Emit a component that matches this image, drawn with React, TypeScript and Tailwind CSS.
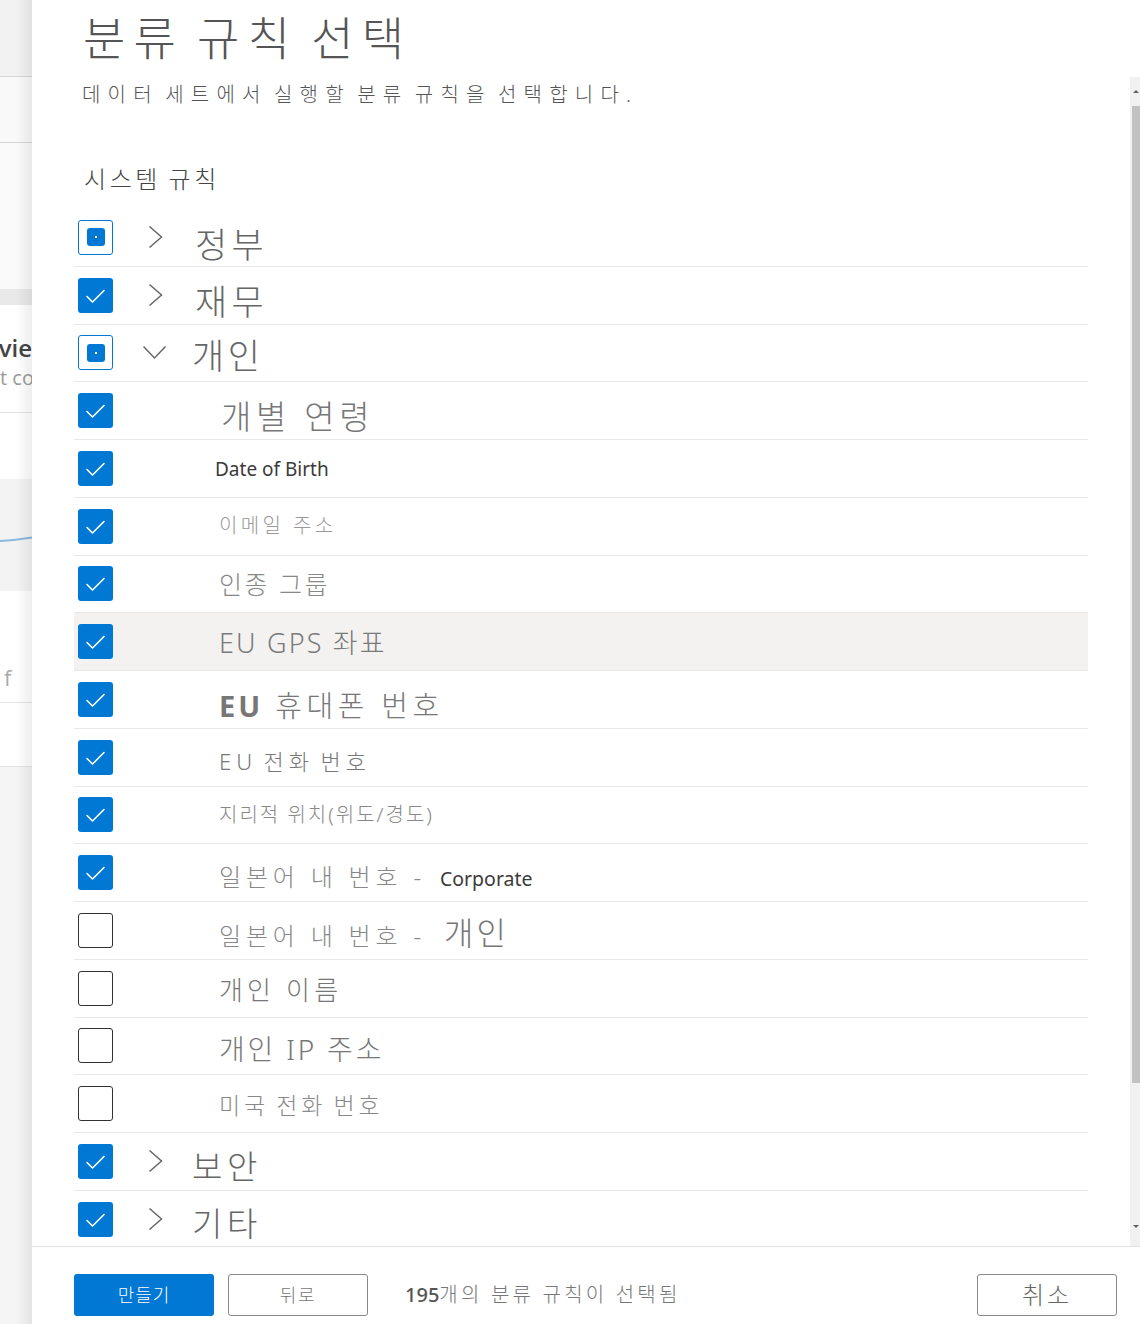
import type { ReactNode } from "react";

type CheckState = "on" | "off" | "mixed";

type Rule = {
  state: CheckState;
  chevron?: "right" | "down";
  label: ReactNode;
  hover?: boolean;
};

const rules: Rule[] = [
  { state: "mixed", chevron: "right", label: <span className="pt-[14px] text-[35px] tracking-[0.12em] text-[#666]">정부</span> },
  { state: "on", chevron: "right", label: <span className="pt-[12px] text-[35px] tracking-[0.12em] text-[#666]">재무</span> },
  { state: "mixed", chevron: "down", label: <span className="ml-[-3px] pt-[6px] text-[35px] tracking-[0.1em] text-[#666]">개인</span> },
  { state: "on", label: <span className="ml-[2px] pt-[12px] text-[33px] tracking-[0.14em] text-[#777]">개별 연령</span> },
  { state: "on", label: <span className="ml-[-4px] pt-[2px] text-[19px] font-normal text-[#3b3a39]">Date of Birth</span> },
  { state: "on", label: <span className="text-[20px] tracking-[0.17em] text-[#999]">이메일 주소</span> },
  { state: "on", label: <span className="pt-[2px] text-[25px] tracking-[0.1em] text-[#888]">인종 그룹</span> },
  { state: "on", hover: true, label: <span className="pt-[2px] text-[27px] tracking-[0.08em] text-[#7a7a7a]">EU GPS 좌표</span> },
  {
    state: "on",
    label: (
      <span className="pt-[13px] text-[29px] tracking-[0.16em] text-[#777]">
        <span className="font-bold tracking-[0.1em]">EU</span> 휴대폰 번호
      </span>
    ),
  },
  {
    state: "on",
    label: <span className="pt-[7px] text-[22px] tracking-[0.23em] text-[#777] [word-spacing:-0.2em]">EU 전화 번호</span>,
  },
  { state: "on", label: <span className="pt-[1px] text-[20px] tracking-[0.1em] text-[#888]">지리적 위치(위도/경도)</span> },
  {
    state: "on",
    label: (
      <span className="flex items-baseline pt-[8px] text-[24px] tracking-[0.2em] text-[#888]">
        일본어 내 번호 -
        <span className="ml-[14px] text-[19.5px] font-normal tracking-normal text-[#3b3a39]">Corporate</span>
      </span>
    ),
  },
  {
    state: "off",
    label: (
      <span className="flex items-baseline pt-[6px] text-[24px] tracking-[0.2em] text-[#888]">
        일본어 내 번호 -<span className="ml-[18px] text-[32px] tracking-[0.1em] text-[#777]">개인</span>
      </span>
    ),
  },
  { state: "off", label: <span className="pt-[4px] text-[26px] tracking-[0.16em] text-[#777]">개인 이름</span> },
  { state: "off", label: <span className="pt-[6px] text-[28px] tracking-[0.1em] text-[#777]">개인 IP 주소</span> },
  {
    state: "off",
    label: <span className="pt-[4px] text-[23px] tracking-[0.17em] text-[#888] [word-spacing:-0.12em]">미국 전화 번호</span>,
  },
  { state: "on", chevron: "right", label: <span className="ml-[-3px] pt-[10px] text-[33px] tracking-[0.14em] text-[#666]">보안</span> },
  { state: "on", chevron: "right", label: <span className="ml-[-3px] pt-[8px] text-[33px] tracking-[0.14em] text-[#666]">기타</span> },
];

function Checkbox({ state }: { state: CheckState }) {
  if (state === "on") {
    return (
      <div className="flex h-[35px] w-[35px] shrink-0 items-center justify-center rounded-[3px] bg-[#0078d4]">
        <svg width="35" height="35" viewBox="0 0 35 35" fill="none">
          <path d="M9 18.5 L14.5 24 L26 12.5" stroke="white" strokeWidth="1.6" strokeLinecap="round" strokeLinejoin="round" />
        </svg>
      </div>
    );
  }
  if (state === "mixed") {
    return (
      <div className="flex h-[35px] w-[35px] shrink-0 items-center justify-center rounded-[3px] border border-[#0078d4] bg-white">
        <div className="flex h-[18px] w-[18px] items-center justify-center rounded-[3px] bg-[#0078d4]">
          <div className="h-[2px] w-[2px] bg-white" />
        </div>
      </div>
    );
  }
  return <div className="h-[35px] w-[35px] shrink-0 rounded-[3px] border border-[#323130] bg-white" />;
}

function Chevron({ dir }: { dir: "right" | "down" }) {
  return (
    <svg width="24" height="24" viewBox="0 0 24 24" fill="none" className="shrink-0">
      {dir === "right" ? (
        <path d="M6.5 1.5 L18.5 12 L6.5 22.5" stroke="#666" strokeWidth="1.5" />
      ) : (
        <path d="M0.5 5.5 L11.5 17 L22.5 5.5" stroke="#666" strokeWidth="1.5" />
      )}
    </svg>
  );
}

function RuleRow({ rule }: { rule: Rule }) {
  return (
    <div
      className={`flex h-[57.75px] shrink-0 items-center border-b border-[#e8e8e8] pl-[4px] ${
        rule.hover ? "bg-[#f3f2f1]" : ""
      }`}
    >
      <Checkbox state={rule.state} />
      {rule.chevron ? (
        <>
          <div className="ml-[30px] flex w-[24px] items-center">
            <Chevron dir={rule.chevron} />
          </div>
          <div className="ml-[28px] flex items-center leading-none">{rule.label}</div>
        </>
      ) : (
        <div className="ml-[106px] flex items-center leading-none">{rule.label}</div>
      )}
    </div>
  );
}

function Backdrop() {
  return (
    <div className="relative flex h-full w-[32px] shrink-0 flex-col overflow-hidden bg-[#f8f8f8]">
      <div className="h-[77px] shrink-0 border-b border-[#d6d6d6] bg-[#f2f2f2]" />
      <div className="h-[66px] shrink-0 border-b border-[#d6d6d6] bg-[#f9f9f9]" />
      <div className="h-[146px] shrink-0 bg-[#fafafa]" />
      <div className="h-[16px] shrink-0 bg-[#e9e9e9]" />
      <div className="flex h-[108px] shrink-0 flex-col overflow-hidden border-b border-[#e2e2e2] bg-white pt-[28px]">
        <span className="self-end whitespace-nowrap font-[family-name:'Open_Sans',sans-serif] text-[24px] font-semibold leading-[30px] text-[#444]">
          vie
        </span>
        <span className="whitespace-nowrap font-[family-name:'Open_Sans',sans-serif] text-[20px] font-normal leading-[30px] text-[#9a9a9a]">
          t co
        </span>
      </div>
      <div className="h-[66px] shrink-0 bg-white" />
      <div className="flex h-[112px] shrink-0 flex-col bg-[#f3f3f3] pt-[56px]">
        <svg width="32" height="10" viewBox="0 0 32 10">
          <path d="M0 6 C10 5.5 20 4.5 32 2.5" stroke="#8ab8e0" strokeWidth="2" fill="none" />
        </svg>
      </div>
      <div className="flex h-[112px] shrink-0 items-end border-b border-[#e4e4e4] bg-white pb-[14px]">
        <span className="ml-[4px] font-[family-name:'Open_Sans',sans-serif] text-[22px] font-normal leading-none text-[#aaa]">f</span>
        <div className="ml-auto h-[24px] w-[6px] bg-white" />
      </div>
      <div className="h-[64px] shrink-0 border-b border-[#e4e4e4] bg-white" />
      <div className="flex-1 bg-[#f5f5f5]" />
      <div className="pointer-events-none absolute inset-0 bg-gradient-to-r from-transparent via-transparent to-black/[0.07]" />
    </div>
  );
}

function Scrollbar() {
  return (
    <div className="flex w-[10px] shrink-0 flex-col bg-[#f1f1f1]">
      <div className="flex h-[29px] items-center justify-end pr-[1px]">
        <div className="h-0 w-0 border-x-[3px] border-b-[3px] border-x-transparent border-b-[#606060]" />
      </div>
      <div className="ml-[2px] h-[977px] bg-[#c1c1c1]" />
      <div className="flex flex-1 items-end justify-end pb-[18px] pr-[1px]">
        <div className="h-0 w-0 border-x-[3px] border-t-[3px] border-x-transparent border-t-[#606060]" />
      </div>
    </div>
  );
}

export default function App() {
  return (
    <div className="flex h-[1324px] w-[1140px] overflow-hidden bg-white font-[family-name:'Noto_Sans','Noto_Sans_CJK_KR',sans-serif] font-light">
      <Backdrop />
      <div className="flex min-w-0 flex-1 flex-col">
        <div className="h-[77px] shrink-0 pl-[51px] pt-[7px]">
          <h1 className="text-[46px] font-light leading-[60px] tracking-[0.18em] text-[#555] [word-spacing:-0.16em]">
            분류 규칙 선택
          </h1>
        </div>
        <div className="flex min-h-0 flex-1">
          <div className="flex min-w-0 flex-1 flex-col overflow-hidden pl-[42px] pr-[42px]">
            <p className="ml-[8px] mt-[4px] text-[20px] leading-[28px] tracking-[0.36em] text-[#555] [word-spacing:-0.3em]">
              데이터 세트에서 실행할 분류 규칙을 선택합니다.
            </p>
            <p className="ml-[10px] mt-[54px] text-[24px] leading-[32px] tracking-[0.15em] text-[#444] [word-spacing:-0.1em]">
              시스템 규칙
            </p>
            <div className="mt-[14px] flex flex-col">
              {rules.map((r, i) => (
                <RuleRow key={i} rule={r} />
              ))}
            </div>
          </div>
          <Scrollbar />
        </div>
        <div className="flex h-[78px] shrink-0 items-start border-t border-[#e1e1e1] pl-[42px] pr-[23px] pt-[27px]">
          <button className="flex h-[42px] w-[140px] items-center justify-center rounded-[3px] bg-[#0078d4] text-[18px] tracking-[0.05em] text-white">
            만들기
          </button>
          <button className="ml-[14px] flex h-[42px] w-[140px] items-center justify-center rounded-[3px] border border-[#8a8886] bg-white text-[18px] tracking-[0.1em] text-[#777]">
            뒤로
          </button>
          <div className="ml-[37px] flex h-[42px] items-center text-[20px] tracking-[0.16em] text-[#777]">
            <span className="font-medium tracking-normal text-[#555]">195</span>개의 분류 규칙이 선택됨
          </div>
          <button className="ml-auto flex h-[42px] w-[140px] items-center justify-center rounded-[3px] border border-[#8a8886] bg-white text-[24px] tracking-[0.12em] text-[#666]">
            취소
          </button>
        </div>
      </div>
    </div>
  );
}
